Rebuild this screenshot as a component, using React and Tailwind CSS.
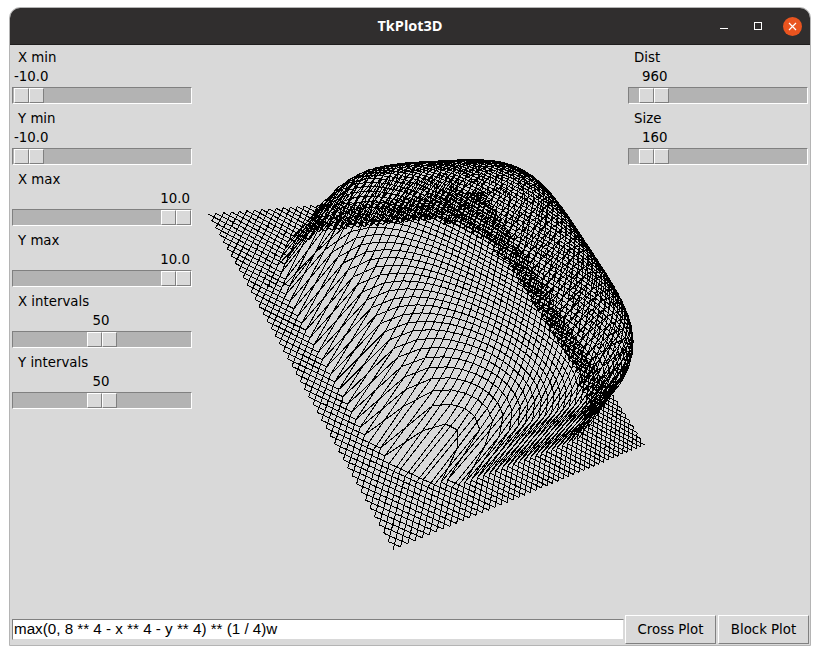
import React from 'react';

// homography of the base plane, from its four corners on screen
const A = [208 - 192, 214 - 45];
const B = [393 - 192, 550 - 45];
const C = [645 - 192, 445 - 45];
const D = [483 - 192, 191 - 45];

const solveUnitSquare = () => {
  const dx1 = B[0] - C[0], dx2 = D[0] - C[0], sx = A[0] - B[0] + C[0] - D[0];
  const dy1 = B[1] - C[1], dy2 = D[1] - C[1], sy = A[1] - B[1] + C[1] - D[1];
  const det = dx1 * dy2 - dx2 * dy1;
  const g = (sx * dy2 - dx2 * sy) / det;
  const h = (dx1 * sy - sx * dy1) / det;
  return [B[0] - A[0] + g * B[0], D[0] - A[0] + h * D[0], A[0], B[1] - A[1] + g * B[1], D[1] - A[1] + h * D[1], A[1], g, h];
};
const H = solveUnitSquare();

// height axis: k is the perspective per unit, vp its vanishing point
const k = -0.016;
const vp = [-300, 1000];

const project = (u, v, z) => {
  const s = (u + 10) / 20, t = (v + 10) / 20;
  const w = H[6] * s + H[7] * t + 1 + k * z;
  const x = H[0] * s + H[1] * t + H[2] + k * vp[0] * z;
  const y = H[3] * s + H[4] * t + H[5] + k * vp[1] * z;
  return [x / w, y / w];
};

const height = (x, y) => Math.pow(Math.max(0, 8 ** 4 - x ** 4 - y ** 4), 1 / 4);

// cross plot: both diagonals of every cell
const buildMesh = () => {
  let d = '';
  const n = 44;
  const step = 20 / n;
  const pt = (a, b) => project(a, b, height(a, b)).map((c) => c.toFixed(1)).join(' ');
  for (let i = 0; i < n; i++) {
    for (let j = 0; j < n; j++) {
      const a = -10 + i * step;
      const b = -10 + j * step;
      d += `M${pt(a, b)}L${pt(a + step, b + step)}M${pt(a + step, b)}L${pt(a, b + step)}`;
    }
  }
  return d;
};

const Scale = ({ label, value, labelClass, valueClass, thumbClass }) => (
  <div className="h-[61px] flex flex-col">
    <div className={`h-[19px] leading-[24px] ${labelClass}`}>{label}</div>
    <div className={`h-[19px] leading-[24px] ${valueClass}`}>{value}</div>
    <div className="h-[17px] mt-[4px] bg-[#b3b3b3] border border-t-[#808080] border-l-[#808080] border-r-white border-b-white flex items-stretch">
      <div className={`flex w-[30px] ${thumbClass}`}>
        <div className="w-[15px] bg-[#d9d9d9] border border-t-white border-l-white border-r-[#808080] border-b-[#808080]" />
        <div className="w-[15px] bg-[#d9d9d9] border border-t-white border-l-white border-r-[#808080] border-b-[#808080]" />
      </div>
    </div>
  </div>
);

const PlotButton = ({ children }) => (
  <button className="w-[91px] h-[29px] bg-[#d9d9d9] text-black text-center border border-t-white border-l-white border-r-[#808080] border-b-[#808080]">
    {children}
  </button>
);

const App = () => {
  const mesh = buildMesh();
  return (
    <div className="w-[820px] h-[655px] bg-white pt-[7px] pl-[9px] font-['DejaVu_Sans',sans-serif] text-[13.33px] text-black">
      <div className="w-[802px] h-[639px] flex flex-col border border-[#b4b4b4] rounded-t-[11px]">
        <div className="h-[37px] shrink-0 bg-[#302e2e] rounded-t-[10px] border-b border-b-[#1f1d1d] flex items-center pl-[8px] pr-[8px]">
          <div className="w-[85px]" />
          <div className="flex-1 text-center text-white font-bold text-[14.5px] font-['Open_Sans',sans-serif]">TkPlot3D</div>
          <div className="flex items-center gap-[19px]">
            <svg width="14" height="14" viewBox="0 0 14 14"><path d="M3 9.5h8" stroke="#fff" strokeWidth="1" /></svg>
            <svg width="14" height="14" viewBox="0 0 14 14"><rect x="4.5" y="3.5" width="7" height="7" fill="none" stroke="#fff" strokeWidth="1" /></svg>
            <div className="w-[19px] h-[19px] rounded-full bg-[#e9541f] flex items-center justify-center">
              <svg width="9" height="9" viewBox="0 0 9 9"><path d="M1 1l7 7M8 1l-7 7" stroke="#fff" strokeWidth="1.2" /></svg>
            </div>
          </div>
        </div>
        <div className="flex-1 bg-[#d9d9d9] flex flex-col">
          <div className="flex-1 flex pl-[2px] pr-[2px]">
            <div className="w-[180px] shrink-0">
              <Scale label="X min" value="-10.0" labelClass="pl-[6px] pt-[1px]" valueClass="pl-[2px] pt-[1px]" thumbClass="ml-[1px]" />
              <Scale label="Y min" value="-10.0" labelClass="pl-[6px] pt-[1px]" valueClass="pl-[2px] pt-[1px]" thumbClass="ml-[1px]" />
              <Scale label="X max" value="10.0" labelClass="pl-[6px] pt-[1px]" valueClass="text-right pr-[2px] pt-[1px]" thumbClass="ml-auto" />
              <Scale label="Y max" value="10.0" labelClass="pl-[6px] pt-[1px]" valueClass="text-right pr-[2px] pt-[1px]" thumbClass="ml-auto" />
              <Scale label="X intervals" value="50" labelClass="pl-[6px] pt-[1px]" valueClass="text-center pr-[2px] pt-[1px]" thumbClass="mx-auto" />
              <Scale label="Y intervals" value="50" labelClass="pl-[6px] pt-[1px]" valueClass="text-center pr-[2px] pt-[1px]" thumbClass="mx-auto" />
            </div>
            <div className="flex-1">
              <svg width="436" height="570" viewBox="0 0 436 570" className="overflow-visible">
                <path d={mesh} fill="none" stroke="#000" strokeWidth="1" shapeRendering="crispEdges" />
              </svg>
            </div>
            <div className="w-[180px] shrink-0">
              <Scale label="Dist" value="960" labelClass="pl-[6px] pt-[1px]" valueClass="pl-[14px] pt-[1px]" thumbClass="ml-[10px]" />
              <Scale label="Size" value="160" labelClass="pl-[6px] pt-[1px]" valueClass="pl-[14px] pt-[1px]" thumbClass="ml-[10px]" />
            </div>
          </div>
          <div className="h-[29px] flex items-center pl-[2px] pr-[1px] mb-[1px]">
            <input
              readOnly
              value="max(0, 8 ** 4 - x ** 4 - y ** 4) ** (1 / 4)w"
              className="w-[612px] shrink-0 h-[21px] bg-white border border-t-[#808080] border-l-[#808080] border-r-[#d9d9d9] border-b-[#d9d9d9] pl-[1px] outline-none font-['Liberation_Sans',sans-serif] text-[15.2px]"
            />
            <div className="ml-[1px] flex gap-[2px]">
              <PlotButton>Cross Plot</PlotButton>
              <PlotButton>Block Plot</PlotButton>
            </div>
          </div>
        </div>
      </div>
    </div>
  );
};

export default App;
